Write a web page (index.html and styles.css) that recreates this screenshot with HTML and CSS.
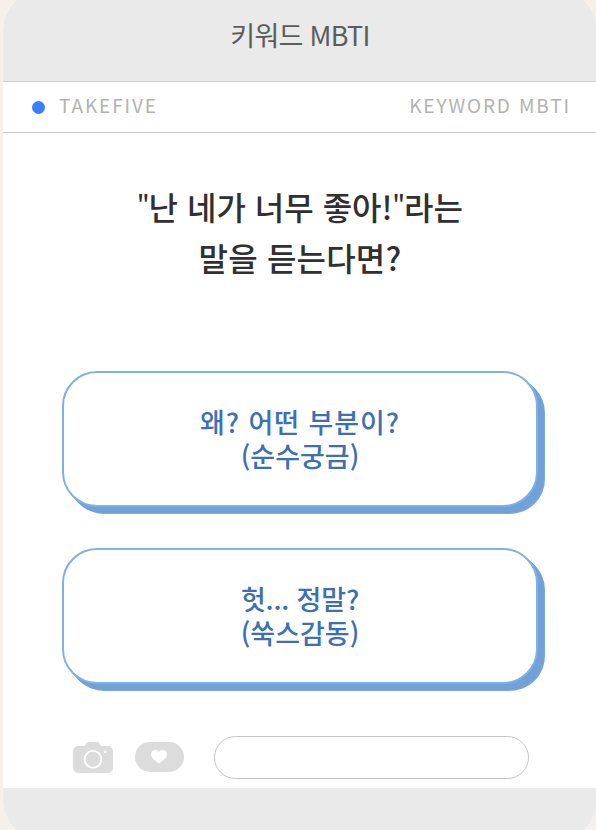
FILE: index.html
```html
<!DOCTYPE html>
<html lang="ko">
<head>
  <meta charset="utf-8">
  <title>키워드 MBTI</title>
  <link rel="stylesheet" href="styles.css">
</head>
<body>
  <div class="container">
    <header class="header">
      <h1>키워드 MBTI</h1>
    </header>

    <div class="sub-header">
      <span class="dot"></span>
      <span class="brand">TAKEFIVE</span>
      <span class="category">KEYWORD MBTI</span>
    </div>

    <main class="content">
      <h2 class="question"><span class="question-first"><span class="quote">"</span>난 네가 너무 좋아!<span class="quote">"</span>라는</span><br><span class="question-second">말을 듣는다면?</span></h2>

      <div class="answers">
        <button class="answer-btn"><span class="answer-wide">왜? 어떤 부분이?</span><span>(순수궁금)</span></button>
        <button class="answer-btn"><span class="answer-narrow">헛... 정말?</span><span>(쑥스감동)</span></button>
      </div>
    </main>

    <div class="toolbar">
      <svg class="camera" width="40" height="31" viewBox="0 0 40 31">
        <path fill="#dcdcdc" d="M5 4h5.500c1.500 0 1.600-.8 2.300-2C13.600.6 14.400 0 16 0h7.500c1.600 0 2.400.6 3.200 2 .7 1.200.8 2 2.300 2h6a5 5 0 0 1 5 5v17a5 5 0 0 1-5 5H5a5 5 0 0 1-5-5V9a5 5 0 0 1 5-5z"/>
        <circle cx="20" cy="17.300" r="8.400" fill="none" stroke="#fff" stroke-width="1.800"/>
        <circle cx="32.200" cy="10" r="1.300" fill="#fff"/>
      </svg>
      <div class="like">
        <svg width="16" height="14" viewBox="0 0 16 14">
          <path fill="#fff" d="M8 13.500C6 12 0 8.500 0 4.200 0 1.600 1.800 0 4.100 0 5.800 0 7.200.9 8 2.100 8.800.9 10.200 0 11.900 0 14.200 0 16 1.600 16 4.200 16 8.500 10 12 8 13.500z"/>
        </svg>
      </div>
      <div class="message-input"></div>
    </div>

    <footer class="footer"></footer>
  </div>
</body>
</html>
```

FILE: styles.css
```css
* {
  margin: 0;
  padding: 0;
  box-sizing: border-box;
}

body {
  width: 596px;
  height: 830px;
  overflow: hidden;
  display: flex;
  font-family: 'Noto Sans CJK KR', sans-serif;
  background: #f5f1e9;
}

.container {
  flex: none;
  display: flex;
  flex-direction: column;
  width: 594px;
  height: 850px;
  margin: -10px 0 0 3px;
  border-radius: 40px;
  background: #fff;
  overflow: hidden;
}

.header {
  height: 92px;
  padding-top: 25px;
  background: #eaeaea;
  border-bottom: 1px solid #ccc;
  text-align: center;
}

.header h1 {
  font-size: 27px;
  font-weight: 400;
  line-height: 40px;
  letter-spacing: -0.7px;
  color: #5c5c5c;
}

.sub-header {
  display: flex;
  align-items: center;
  height: 51px;
  padding: 0 26px 0 29px;
  border-bottom: 1px solid #ccc;
  font-size: 19px;
  line-height: 28px;
  color: #b2b2b2;
}

.dot {
  width: 13px;
  height: 13px;
  margin-right: 14px;
  border-radius: 50%;
  background: #387ff8;
}

.brand {
  padding-bottom: 4px;
  letter-spacing: 1.9px;
}

.category {
  margin-left: auto;
  padding-bottom: 4px;
  letter-spacing: 1.9px;
}

.content {
  padding: 48px 59px 0;
}

.question {
  height: 190px;
  font-size: 32px;
  font-weight: 500;
  line-height: 51px;
  text-align: center;
  color: #303030;
}

.quote {
  font-size: 24px;
  line-height: 1;
  letter-spacing: -1px;
  vertical-align: 5px;
}

.question-second {
  letter-spacing: 0.2px;
}

.answers {
  display: flex;
  flex-direction: column;
  gap: 41px;
}

.answer-btn {
  display: flex;
  flex-direction: column;
  align-items: center;
  justify-content: center;
  height: 136px;
  border: 2px solid #80b1e5;
  border-radius: 35px;
  background: #fff;
  box-shadow: 6px 6px 0 #72a1d7, 7px 7px 0 #78a8dd;
  font-family: inherit;
  font-size: 27px;
  font-weight: 500;
  line-height: 34px;
  color: #3d70b0;
  cursor: pointer;
}

.answer-wide {
  letter-spacing: 0.9px;
}

.answer-narrow {
  letter-spacing: -0.2px;
}

.toolbar {
  display: flex;
  align-items: center;
  height: 43px;
  margin-top: 52px;
  padding-left: 70px;
}

.like {
  display: flex;
  align-items: center;
  justify-content: center;
  width: 49px;
  height: 30px;
  margin: 0 0 1px 22px;
  padding-right: 1px;
  border-radius: 15px;
  background: #dcdcdc;
}

.message-input {
  width: 315px;
  height: 43px;
  margin-left: 30px;
  border: 1px solid #c4c4c4;
  border-radius: 22px;
}

.footer {
  flex: 1;
  margin-top: 9px;
  background: #eaeaea;
}
```
